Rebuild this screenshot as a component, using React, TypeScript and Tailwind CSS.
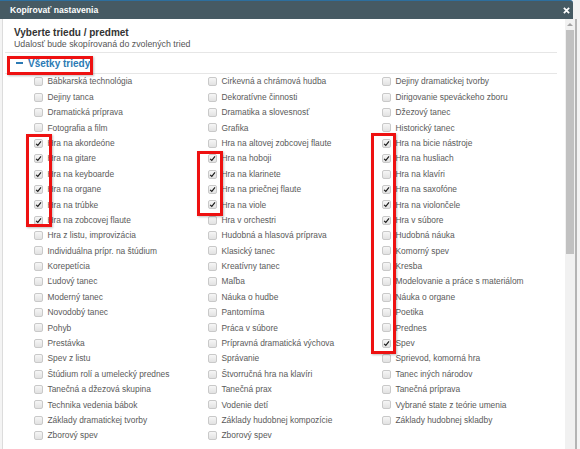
import React from "react";

type Item = { label: string; checked?: boolean };

const columns: Item[][] = [
  [
    { label: "Bábkarská technológia" },
    { label: "Dejiny tanca" },
    { label: "Dramatická príprava" },
    { label: "Fotografia a film" },
    { label: "Hra na akordeóne", checked: true },
    { label: "Hra na gitare", checked: true },
    { label: "Hra na keyboarde", checked: true },
    { label: "Hra na organe", checked: true },
    { label: "Hra na trúbke", checked: true },
    { label: "Hra na zobcovej flaute", checked: true },
    { label: "Hra z listu, improvizácia" },
    { label: "Individuálna prípr. na štúdium" },
    { label: "Korepetícia" },
    { label: "Ľudový tanec" },
    { label: "Moderný tanec" },
    { label: "Novodobý tanec" },
    { label: "Pohyb" },
    { label: "Prestávka" },
    { label: "Spev z listu" },
    { label: "Štúdium rolí a umelecký prednes" },
    { label: "Tanečná a džezová skupina" },
    { label: "Technika vedenia bábok" },
    { label: "Základy dramatickej tvorby" },
    { label: "Zborový spev" },
  ],
  [
    { label: "Cirkevná a chrámová hudba" },
    { label: "Dekoratívne činnosti" },
    { label: "Dramatika a slovesnosť" },
    { label: "Grafika" },
    { label: "Hra na altovej zobcovej flaute" },
    { label: "Hra na hoboji", checked: true },
    { label: "Hra na klarinete", checked: true },
    { label: "Hra na priečnej flaute", checked: true },
    { label: "Hra na viole", checked: true },
    { label: "Hra v orchestri" },
    { label: "Hudobná a hlasová príprava" },
    { label: "Klasický tanec" },
    { label: "Kreatívny tanec" },
    { label: "Maľba" },
    { label: "Náuka o hudbe" },
    { label: "Pantomíma" },
    { label: "Práca v súbore" },
    { label: "Prípravná dramatická výchova" },
    { label: "Správanie" },
    { label: "Štvorručná hra na klavíri" },
    { label: "Tanečná prax" },
    { label: "Vodenie detí" },
    { label: "Základy hudobnej kompozície" },
    { label: "Zborový spev" },
  ],
  [
    { label: "Dejiny dramatickej tvorby" },
    { label: "Dirigovanie speváckeho zboru" },
    { label: "Džezový tanec" },
    { label: "Historický tanec" },
    { label: "Hra na bicie nástroje", checked: true },
    { label: "Hra na husliach", checked: true },
    { label: "Hra na klavíri" },
    { label: "Hra na saxofóne", checked: true },
    { label: "Hra na violončele", checked: true },
    { label: "Hra v súbore", checked: true },
    { label: "Hudobná náuka" },
    { label: "Komorný spev" },
    { label: "Kresba" },
    { label: "Modelovanie a práce s materiálom" },
    { label: "Náuka o organe" },
    { label: "Poetika" },
    { label: "Prednes" },
    { label: "Spev", checked: true },
    { label: "Sprievod, komorná hra" },
    { label: "Tanec iných národov" },
    { label: "Tanečná príprava" },
    { label: "Vybrané state z teórie umenia" },
    { label: "Základy hudobnej skladby" },
  ],
];

function Checkbox({ checked }: { checked?: boolean }) {
  return (
    <span className="relative flex h-[9px] w-[9px] shrink-0 items-center justify-center rounded-[2px] border border-[#c9c9c9] bg-gradient-to-b from-[#f6f6f6] to-[#e2e2e2]">
      {checked && (
        <svg viewBox="0 0 10 10" className="h-[7px] w-[7px]">
          <path d="M1.6 5.4 L4 7.8 L8.6 2" fill="none" stroke="#1a1a1a" strokeWidth="1.6" />
        </svg>
      )}
    </span>
  );
}

// red annotation boxes drawn over the dialog
const marks = [
  { left: 7, top: 56, width: 86, height: 19 },
  { left: 26, top: 134, width: 26, height: 93 },
  { left: 197, top: 151, width: 26, height: 65 },
  { left: 371, top: 133, width: 25, height: 221 },
];

export default function App() {
  return (
    <div className="relative h-[449px] w-[580px] overflow-hidden bg-[#f2f2f2] font-['Liberation_Sans',Arial,sans-serif]">
      <div className="flex h-[19px] w-[573px] items-center justify-between rounded-tr-[3px] border-t border-[#2d6f9e] bg-[#465a63] pl-[10px] pr-[2px]">
        <span className="text-[8.6px] font-bold text-white">Kopírovať nastavenia</span>
        <svg viewBox="0 0 8 8" className="mr-[1px] h-[7px] w-[7px]">
          <path d="M1 1 L7 7 M7 1 L1 7" stroke="#fff" strokeWidth="2" />
        </svg>
      </div>

      <div className="flex h-[430px]">
        <div className="w-[3px] border-r border-[#dcdcdc] bg-[#f4f4f4]" />

        <div className="w-[562px] bg-white">
          <div className="mx-[2px] mr-[8px] border-b border-[#e6e6e6] px-[9px] pb-[2px] pt-[8px]">
            <h2 className="text-[10px] font-bold leading-[12px] text-[#333]">Vyberte triedu / predmet</h2>
            <p className="text-[8.8px] leading-[11px] text-[#555]">Udalosť bude skopírovaná do zvolených tried</p>
          </div>

          <div className="mx-[2px] mr-[8px] flex h-[21px] items-center gap-[5px] border-b border-[#e6e6e6] pl-[11px]">
            <span className="h-[2px] w-[7px] bg-[#2b7ab4]" />
            <span className="text-[10px] font-bold text-[#2b7ab4]">Všetky triedy</span>
          </div>

          <div className="flex pl-[31px]">
            {columns.map((col, ci) => (
              <ul key={ci} className="w-[174px]">
                {col.map((item, i) => (
                  <li key={i} className="flex h-[15.4px] items-center gap-[4.5px]">
                    <Checkbox checked={item.checked} />
                    <span className="whitespace-nowrap text-[8.4px] text-[#5a5a5a]">{item.label}</span>
                  </li>
                ))}
              </ul>
            ))}
          </div>
        </div>

        <div className="flex w-[10px] flex-col bg-[#f1f1f1]">
          <div className="flex h-[11px] items-center justify-center">
            <span className="h-0 w-0 border-x-[3px] border-b-[3px] border-x-transparent border-b-[#a3a3a3]" />
          </div>
          <div className="mx-[1px] h-[224px] bg-[#c1c1c1]" />
        </div>

        <div className="w-[5px] border-l-2 border-[#b4b4b4] bg-[#f4f4f4]" />
      </div>

      {marks.map((m, i) => (
        <div
          key={i}
          className="absolute border-[3px] border-[#ee1111] shadow-[1px_1px_2px_rgba(0,0,0,0.25)]"
          style={{ left: m.left, top: m.top, width: m.width, height: m.height }}
        />
      ))}
    </div>
  );
}
